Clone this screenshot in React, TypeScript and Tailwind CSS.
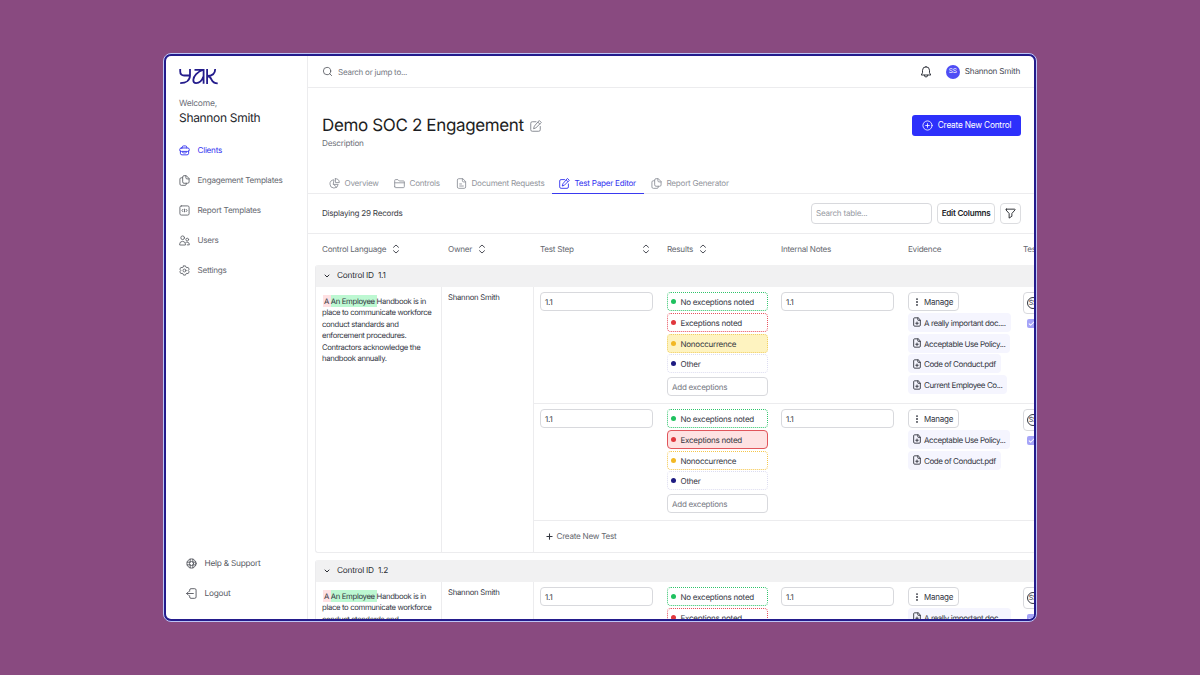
import React from "react";
import {
  ChevronDown,
  CirclePlus,
  EllipsisVertical,
  FilePlus,
  Plus,
  Search,
} from "lucide-react";
import clsx from "clsx";

type IconProps = { className?: string; children?: React.ReactNode };

const Icon = ({ className, children }: IconProps) => (
  <svg
    viewBox="0 0 24 24"
    fill="none"
    stroke="currentColor"
    strokeWidth={2}
    strokeLinecap="round"
    strokeLinejoin="round"
    className={clsx("shrink-0", className)}
  >
    {children}
  </svg>
);

const ClientsIcon = () => (
  <Icon className="size-[11px]">
    <path d="M7 6.500V5a3 3 0 0 1 3-3h4a3 3 0 0 1 3 3v1.500" />
    <rect x="1.500" y="6.500" width="21" height="7.500" rx="3.500" />
    <path d="M3 13.500V18a3.500 3.500 0 0 0 3.500 3.500h11A3.500 3.500 0 0 0 21 18v-4.500" />
    <path d="M8 16.500c2.500 1.300 5.500 1.300 8 0" />
  </Icon>
);

const PagesIcon = ({ className = "size-[11px]" }: IconProps) => (
  <Icon className={className}>
    <path d="M15 1.500h-4a3 3 0 0 0-3 3V15a3 3 0 0 0 3 3h8a3 3 0 0 0 3-3V8.500z" />
    <path d="M15 1.500V6a2.500 2.500 0 0 0 2.500 2.500H22" />
    <path d="M8 6H5a3 3 0 0 0-3 3v10.500a3 3 0 0 0 3 3h8a3 3 0 0 0 3-3V18" />
  </Icon>
);

const ReportIcon = () => (
  <Icon className="size-[11px]">
    <rect x="2" y="2" width="20" height="20" rx="3" />
    <path d="M8.500 9.500L6.500 12l2 2.500M15.500 9.500l2 2.500-2 2.500M12 9v6" />
  </Icon>
);

const UsersIcon = () => (
  <Icon className="size-[11px]">
    <circle cx="8" cy="6" r="4" />
    <path d="M1.500 21v-1.500A6 6 0 0 1 7.500 14h1a6 6 0 0 1 5.500 5.500V21z" />
    <circle cx="18" cy="10" r="3" />
    <path d="M15 16a5 5 0 0 1 7.500 4v1.500H18" />
  </Icon>
);

const SettingsIcon = () => (
  <Icon className="size-[11px]">
    <path d="M9.700 2h4.600l.8 2.800 2 1.100 2.800-.7 2.300 4-2 2v1.600l2 2-2.300 4-2.800-.7-2 1.100-.8 2.800H9.700l-.8-2.800-2-1.100-2.800.7-2.300-4 2-2v-1.600l-2-2 2.300-4 2.800.7 2-1.100z" />
    <circle cx="12" cy="12" r="3.200" />
  </Icon>
);

const HelpIcon = () => (
  <Icon className="size-[11px]">
    <circle cx="12" cy="12" r="10" />
    <circle cx="12" cy="12" r="4.500" />
    <path d="M9 2.500v6M15 2.500v6M9 15.500v6M15 15.500v6M2.500 9h6M15.500 9h6M2.500 15h6M15.500 15h6" />
  </Icon>
);

const LogoutIcon = () => (
  <Icon className="size-[11px]">
    <path d="M8 7V4.500a3 3 0 0 1 3-3h8a3 3 0 0 1 3 3v15a3 3 0 0 1-3 3h-8a3 3 0 0 1-3-3V17" />
    <path d="M16 12H1.500M5.500 8l-4 4 4 4" />
  </Icon>
);

const EditIcon = ({ className = "size-[11px]" }: IconProps) => (
  <Icon className={className}>
    <path d="M12 3.500H4.500a3 3 0 0 0-3 3v13a3 3 0 0 0 3 3h13a3 3 0 0 0 3-3V13" />
    <path d="M19 1.500l3.500 3.500L11.500 16 7 17.500 8.500 13z" />
    <path d="M16 4.500l3.500 3.500" />
  </Icon>
);

const PieIcon = () => (
  <Icon className="size-[11px]">
    <path d="M10 4a9 9 0 1 0 10 10H10z" />
    <path d="M14 1.500V10h8.500A8.500 8.500 0 0 0 14 1.500z" />
    <path d="M10 14l6.500 6" />
  </Icon>
);

const FolderIcon = () => (
  <Icon className="size-[11px]">
    <path d="M1.500 19V5.500a2 2 0 0 1 2-2h5l3 3h9a2 2 0 0 1 2 2V19a2 2 0 0 1-2 2h-17a2 2 0 0 1-2-2z" />
    <path d="M1.500 10.500h21" />
  </Icon>
);

const DocIcon = () => (
  <Icon className="size-[11px]">
    <path d="M14 1.500H6a3 3 0 0 0-3 3v15a3 3 0 0 0 3 3h12a3 3 0 0 0 3-3V8.500z" />
    <path d="M14 1.500V6a2.500 2.500 0 0 0 2.500 2.500H21M8 13h4M8 17.500h8" />
  </Icon>
);

const BellIcon = () => (
  <Icon className="size-[12px] text-[#33363f]">
    <path d="M12 1.500a7 7 0 0 0-7 7v5L2.500 18h19L19 13.500v-5a7 7 0 0 0-7-7z" />
    <path d="M8.500 18.500a3.500 3.500 0 0 0 7 0" />
  </Icon>
);

const FilterIcon = () => (
  <Icon className="size-[11px] text-[#22242a]">
    <path d="M3 2.500h18a1 1 0 0 1 .8 1.700L15 12v6l-6 4V12L2.200 4.200A1 1 0 0 1 3 2.500z" />
  </Icon>
);

const SortIcon = () => (
  <svg
    viewBox="0 0 8 10"
    fill="none"
    stroke="#4b4e57"
    strokeWidth={1}
    strokeLinecap="round"
    strokeLinejoin="round"
    className="h-[10px] w-2 shrink-0"
  >
    <path d="M1.500 3.300L4 1l2.500 2.300M1.500 6.700L4 9l2.500-2.300" />
  </svg>
);

const Logo = () => (
  <svg
    viewBox="0 0 39 17"
    fill="none"
    stroke="#241c8c"
    strokeWidth={1.8}
    className="h-[17px] w-[39px]"
    role="img"
    aria-label="yak"
  >
    <path d="M1.200 1v2.200c0 3 1.300 4.300 4 4.300h5.500M11 1v6.300c0 5-3.800 7.900-9.800 7.900" />
    <path d="M15.500 1.800h9.100v14M23.800 2c-5 1.500-9.500 6.300-9.500 10 0 2 1 3.100 2.800 3.100 3.200 0 6-2.800 7.200-6.300" />
    <path d="M28.100 1v15M36.200 1c0 4.300-3 7-8.100 7 2.500 0 3.200.8 4.300 3.300 1.200 2.800 2.800 4 6.300 4" />
  </svg>
);

const navItems = [
  { label: "Clients", icon: <ClientsIcon />, active: true },
  { label: "Engagement Templates", icon: <PagesIcon /> },
  { label: "Report Templates", icon: <ReportIcon /> },
  { label: "Users", icon: <UsersIcon /> },
  { label: "Settings", icon: <SettingsIcon /> },
];

const tabs = [
  { label: "Overview", icon: <PieIcon />, width: "w-[65px]" },
  { label: "Controls", icon: <FolderIcon />, width: "w-[62px]" },
  { label: "Document Requests", icon: <DocIcon />, width: "w-[103px]" },
  {
    label: "Test Paper Editor",
    icon: <EditIcon />,
    width: "w-[92px]",
    active: true,
  },
  { label: "Report Generator", icon: <PagesIcon />, width: "w-[93px]" },
];

const Sidebar = () => (
  <aside className="flex w-[142px] shrink-0 flex-col border-r border-[#ececee] pl-[13px]">
    <div className="mt-[12px]">
      <Logo />
    </div>
    <p className="mt-[13px] text-[8.500px] leading-[13px] text-[#6d7079]">
      Welcome,
    </p>
    <p className="text-[12px] leading-[13px] tracking-[-0.320px] text-[#25272d]">
      Shannon Smith
    </p>
    <nav className="mt-[11px] flex flex-col">
      {navItems.map((item) => (
        <a
          key={item.label}
          className={clsx(
            "flex h-[30px] items-center gap-[7.500px] text-[8.100px]",
            item.active ? "text-[#3333f0]" : "text-[#65686f]"
          )}
        >
          {item.icon}
          {item.label}
        </a>
      ))}
    </nav>
    <div className="mt-auto mb-[10.500px] flex flex-col pl-[7px] text-[8.300px] text-[#55585f]">
      <a className="flex h-[30px] items-center gap-[7.500px]">
        <HelpIcon />
        <span className="pt-px">Help &amp; Support</span>
      </a>
      <a className="flex h-[30px] items-center gap-[7.500px]">
        <LogoutIcon />
        <span className="pt-px">Logout</span>
      </a>
    </div>
  </aside>
);

const TopBar = () => (
  <div className="flex h-8 shrink-0 items-center border-b border-[#ececee] pr-[14px] pl-[14px]">
    <Search className="size-[11px] text-[#55585f]" strokeWidth={1.8} />
    <span className="ml-[5px] text-[8px] text-[#75787f]">
      Search or jump to...
    </span>
    <div className="ml-auto flex items-center">
      <BellIcon />
      <span className="ml-[14px] flex size-[14px] items-center justify-center rounded-full bg-[#4f4df5] text-[6.500px] text-white">
        SS
      </span>
      <span className="ml-[5px] text-[8.200px] text-[#4b4e57]">
        Shannon Smith
      </span>
    </div>
  </div>
);

const PageHeader = () => (
  <div className="flex h-[106px] shrink-0 flex-col border-b border-[#ececee]">
    <div className="flex justify-between pr-[13px] pl-[14px]">
      <div className="mt-[27px]">
        <div className="flex items-center gap-[6px]">
          <h1 className="pt-px text-[17px] leading-[21px] tracking-[-0.360px] text-[#1d1e23]">
            Demo SOC 2 Engagement
          </h1>
          <EditIcon className="size-[12px] text-[#8b8e96]" />
        </div>
        <p className="text-[8.200px] leading-[12px] text-[#6d7079]">
          Description
        </p>
      </div>
      <button className="mt-[27px] flex h-[21px] w-[109px] items-center justify-center gap-[5px] rounded-[3px] bg-[#2d30fb] text-[8.300px] tracking-[-0.200px] text-white">
        <CirclePlus className="size-[11px]" strokeWidth={1.8} />
        Create New Control
      </button>
    </div>
    <div className="mt-auto -mb-px flex pl-[14px]">
      {tabs.map((tab) => (
        <a
          key={tab.label}
          className={clsx(
            "flex h-[21px] items-center gap-[4.500px] border-b pl-[7px] text-[8.100px] whitespace-nowrap",
            tab.width,
            tab.active
              ? "border-[#3a3af0] text-[#3333f0]"
              : "border-transparent text-[#92959c]"
          )}
        >
          {tab.icon}
          {tab.label}
        </a>
      ))}
    </div>
  </div>
);

const Toolbar = () => (
  <div className="flex h-10 shrink-0 items-center border-b border-[#ececee] pr-[13px] pl-[14px] text-[8.100px]">
    <span className="text-[#3b3d45]">Displaying 29 Records</span>
    <div className="ml-auto flex h-[21px] w-[121px] items-center rounded-[4px] border border-[#d8d9dd] pl-1 text-[#989ba3]">
      Search table...
    </div>
    <button className="ml-[5px] flex h-[21px] w-[58px] items-center justify-center rounded-[4px] border border-[#dcdde0] font-semibold whitespace-nowrap text-[#22242a]">
      Edit Columns
    </button>
    <button className="ml-[5px] flex size-[21px] items-center justify-center rounded-[4px] border border-[#dcdde0]">
      <FilterIcon />
    </button>
  </div>
);

const TableHead = () => (
  <div className="flex h-[31px] shrink-0 items-center pl-[7px] text-[8.100px] whitespace-nowrap text-[#65686f]">
    <div className="flex w-[126px] shrink-0 items-center gap-[5.500px] pl-[7px]">
      Control Language <SortIcon />
    </div>
    <div className="flex w-[92px] shrink-0 items-center gap-[5.500px] pl-[7px]">
      Owner <SortIcon />
    </div>
    <div className="flex w-[127px] shrink-0 items-center justify-between pr-[10px] pl-[7px]">
      Test Step <SortIcon />
    </div>
    <div className="flex w-[114px] shrink-0 items-center gap-[5.500px] pl-[7px]">
      Results <SortIcon />
    </div>
    <div className="w-[127px] shrink-0 pl-[7px]">Internal Notes</div>
    <div className="w-[115px] shrink-0 pl-[7px]">Evidence</div>
    <div className="w-[115px] shrink-0 pl-[7px]">Tester</div>
  </div>
);

const results = [
  {
    label: "No exceptions noted",
    dot: "bg-[#1fc15f]",
    idle: "border-dotted border-[#2fc46b]",
    on: "border-[#2fc46b] bg-[#dcfce7]",
  },
  {
    label: "Exceptions noted",
    dot: "bg-[#e0383e]",
    idle: "border-dotted border-[#e8505c]",
    on: "border-[#e0555b] bg-[#fee2e2]",
  },
  {
    label: "Nonoccurrence",
    dot: "bg-[#f2b824]",
    idle: "border-dotted border-[#f5c64a]",
    on: "border-dotted border-[#f0cf62] bg-[#fef3c0]",
  },
  {
    label: "Other",
    dot: "bg-[#1e1b82]",
    idle: "border-dotted border-[#dcdcf0]",
    on: "border-[#1e1b82] bg-[#e0e7ff]",
  },
];

const TextBox = ({ children }: { children: string }) => (
  <div className="flex h-[19px] w-[113px] items-center rounded-[4px] border border-[#d8d9dd] pt-px pl-1 text-[#33363f]">
    {children}
  </div>
);

type TestRowProps = { selected?: string; files: string[] };

const TestRow = ({ selected, files }: TestRowProps) => (
  <div className="flex h-[117px] border-b border-[#ececee] pt-[5.300px] text-[8px] whitespace-nowrap text-[#33363f]">
    <div className="w-[127px] shrink-0 pl-[6px]">
      <TextBox>1.1</TextBox>
    </div>
    <div className="flex w-[114px] shrink-0 flex-col gap-[1.700px] pl-[6px]">
      {results.map((r) => (
        <div
          key={r.label}
          className={clsx(
            "flex h-[19px] w-[101px] items-center gap-[4.500px] rounded-[4px] border pl-[3px]",
            selected === r.label ? r.on : r.idle
          )}
        >
          <span className={clsx("size-[5px] rounded-full", r.dot)} />
          <span className="pt-px">{r.label}</span>
        </div>
      ))}
      <div className="mt-[2px] flex h-[19px] w-[101px] items-center rounded-[4px] border border-[#d8d9dd] pt-px pl-1 text-[#75787f]">
        Add exceptions
      </div>
    </div>
    <div className="w-[127px] shrink-0 pl-[6px]">
      <TextBox>1.1</TextBox>
    </div>
    <div className="flex w-[115px] shrink-0 flex-col items-start gap-[1.700px] pl-[6px]">
      <button className="flex h-[19px] w-[51px] items-center gap-[2px] rounded-[4px] border border-[#d8d9dd] pl-[3px]">
        <EllipsisVertical className="size-[10px]" strokeWidth={2.500} />
        <span className="pt-px">Manage</span>
      </button>
      {files.map((file) => (
        <div
          key={file}
          className="flex h-[19px] items-center gap-[2px] rounded-[4px] bg-[#f5f5fe] pr-[5px] pl-1 tracking-[-0.420px]"
        >
          <FilePlus className="size-[10px]" strokeWidth={2.200} />
          <span className="pt-px">{file}</span>
        </div>
      ))}
    </div>
    <div className="w-[115px] shrink-0 pl-[6px]">
      <div className="flex h-[22px] w-[80px] items-center rounded-[4px] border border-[#d8d9dd] pl-[3px]">
        <span className="flex size-[12px] items-center justify-center rounded-full border border-[#33363f] text-[7px]">
          SS
        </span>
      </div>
      <span className="mt-[5px] ml-1 flex size-[9px] items-center justify-center rounded-[2px] bg-[#a5a4f8] text-white">
        <Icon className="size-[7px]">
          <path d="M4 13l5 5L20 7" strokeWidth={3.500} />
        </Icon>
      </span>
    </div>
  </div>
);

type ControlGroupProps = {
  id: string;
  tests: TestRowProps[];
};

const ControlGroup = ({ id, tests }: ControlGroupProps) => (
  <section className="ml-[7px] w-[840px] shrink-0 overflow-hidden rounded-[3px] border-b border-l border-[#ececee]">
    <div className="-ml-px flex h-[22px] items-center gap-[6px] bg-[#f1f1f2] pl-[8px] text-[8.300px] text-[#2b2d34]">
      <ChevronDown className="size-[8px]" strokeWidth={3} />
      <span className="pt-px">Control ID&nbsp; {id}</span>
    </div>
    <div className="flex">
      <div className="w-[126px] shrink-0 border-r border-[#ececee] pt-[8.500px] pl-[6px] text-[7.700px] leading-[11.500px] tracking-[-0.330px] whitespace-nowrap text-[#33363f]">
        <span className="ml-px bg-[#ffe1e3] py-[1.500px] pl-px">A </span>
        <span className="bg-[#bdf8d2] py-[1.500px]">An Employee </span>
        Handbook is in
        <br />
        place to communicate workforce
        <br />
        conduct standards and
        <br />
        enforcement procedures.
        <br />
        Contractors acknowledge the
        <br />
        handbook annually.
      </div>
      <div className="w-[92px] shrink-0 border-r border-[#ececee] pt-[5px] pl-[6px] text-[7.700px] leading-[12px] text-[#33363f]">
        Shannon Smith
      </div>
      <div>
        {tests.map((test, i) => (
          <TestRow key={i} {...test} />
        ))}
        <div className="flex h-[31px] items-center gap-[3px] pl-[10.500px] text-[8.100px] text-[#65686f]">
          <Plus className="size-[9px] text-[#33363f]" strokeWidth={2.800} />
          Create New Test
        </div>
      </div>
    </div>
  </section>
);

const allFiles = [
  "A really important doc....",
  "Acceptable Use Policy...",
  "Code of Conduct.pdf",
  "Current Employee Co...",
];

const groups: ControlGroupProps[] = [
  {
    id: "1.1",
    tests: [
      { selected: "Nonoccurrence", files: allFiles },
      { selected: "Exceptions noted", files: allFiles.slice(1, 3) },
    ],
  },
  { id: "1.2", tests: [{ files: allFiles }] },
];

const App = () => {
  return (
    <div className="h-[675px] w-[1200px] overflow-hidden bg-[#894a80] pt-[53px] font-['Inter',sans-serif] tracking-[-0.240px] [text-rendering:geometricPrecision]">
      <div className="mx-auto h-[569px] w-[874px] overflow-hidden rounded-[8px] border border-[#bcc4f6] bg-[#241c8c] p-[2px]">
        <div className="flex h-full overflow-hidden rounded-[5px] bg-white">
          <Sidebar />
          <main className="flex min-w-0 flex-1 flex-col overflow-hidden">
            <TopBar />
            <PageHeader />
            <Toolbar />
            <TableHead />
            <div className="flex min-h-0 flex-1 flex-col gap-[7px] overflow-hidden">
              {groups.map((group) => (
                <ControlGroup key={group.id} {...group} />
              ))}
            </div>
          </main>
        </div>
      </div>
    </div>
  );
};

export default App;
